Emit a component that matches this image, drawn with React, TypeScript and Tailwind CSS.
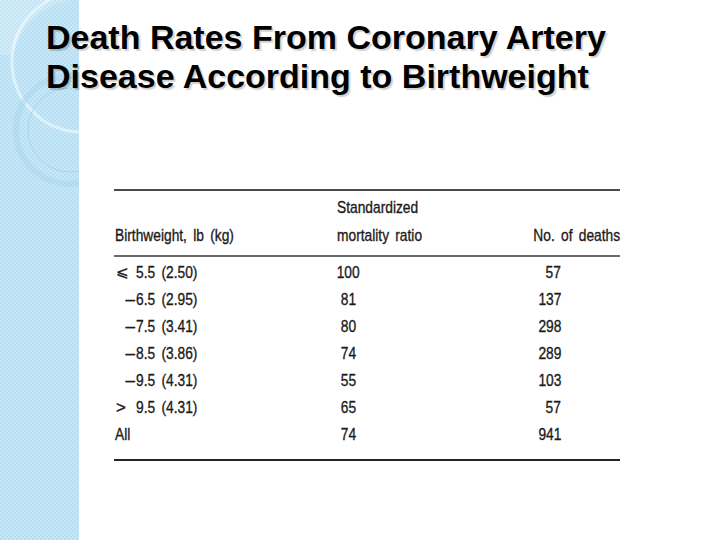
import React from "react";

const rows: { pre: string; preAlign: "l" | "r" | "n"; w: string; smr: string; n: string }[] = [
  { pre: "⩽", preAlign: "l", w: "5.5 (2.50)", smr: "100", n: "57" },
  { pre: "–", preAlign: "r", w: "6.5 (2.95)", smr: "81", n: "137" },
  { pre: "–", preAlign: "r", w: "7.5 (3.41)", smr: "80", n: "298" },
  { pre: "–", preAlign: "r", w: "8.5 (3.86)", smr: "74", n: "289" },
  { pre: "–", preAlign: "r", w: "9.5 (4.31)", smr: "55", n: "103" },
  { pre: ">", preAlign: "l", w: "9.5 (4.31)", smr: "65", n: "57" },
  { pre: "", preAlign: "n", w: "All", smr: "74", n: "941" },
];

function Strip() {
  return (
    <div className="absolute left-0 top-0 h-[540px] w-[79px] overflow-hidden bg-[#bfe3f5] bg-[repeating-conic-gradient(#b6def2_0_25%,#c9e9f8_0_50%)] [background-size:4px_4px]">
      <svg width="79" height="540" viewBox="0 0 79 540" className="block">
        <path d="M0 0 L70 0 A70 70 0 0 0 13 55 L0 55 Z" fill="#ffffff" opacity="0.2" />
        <circle cx="82" cy="62" r="70" fill="none" stroke="#ffffff" strokeWidth="3" opacity="0.5" />
        <circle cx="70" cy="130" r="54" fill="none" stroke="#a9d6ec" strokeWidth="6" opacity="0.5" />
        <circle cx="70" cy="130" r="42" fill="none" stroke="#9ccde6" strokeWidth="1" opacity="0.7" />
      </svg>
    </div>
  );
}

function T({ children, origin = "l" }: { children: React.ReactNode; origin?: "l" | "c" | "r" }) {
  const o = origin === "l" ? "origin-left" : origin === "r" ? "origin-right" : "origin-center";
  return (
    <span className={`inline-block shrink-0 whitespace-nowrap scale-x-[0.81] [word-spacing:3px] ${o}`}>{children}</span>
  );
}

export default function App() {
  const tf = { fontFamily: '"Liberation Sans", Arial, sans-serif' };
  return (
    <div className="relative h-[540px] w-[720px] overflow-hidden bg-white">
      <Strip />
      <div className="relative flex flex-col">
        <h1
          className="pl-[46px] pt-[18px] text-[34px] font-bold leading-[39px] text-black [text-shadow:2px_2px_1px_rgba(0,0,0,0.18)]"
          style={{ fontFamily: '"Liberation Sans", Arial, sans-serif' }}
        >
          Death Rates From Coronary Artery
          <br />
          Disease According to Birthweight
        </h1>
        <div
          className="ml-[114px] mt-[93px] w-[506px] text-[17px] text-[#1c1a1b] [-webkit-text-stroke:0.35px_#1c1a1b]"
          style={tf}
        >
          <div className="h-[2px] bg-[#4a4a4a]" />
          <div className="grid grid-cols-[223px_200px_83px] pb-[5px] pt-[3px] leading-[28px]">
            <div className="pl-[1px]">
              <div>&nbsp;</div>
              <div>
                <T>Birthweight, lb (kg)</T>
              </div>
            </div>
            <div>
              <div>
                <T>Standardized</T>
              </div>
              <div>
                <T>mortality ratio</T>
              </div>
            </div>
            <div>
              <div>&nbsp;</div>
              <div className="flex justify-end">
                <T origin="r">No. of deaths</T>
              </div>
            </div>
          </div>
          <div className="h-[2px] bg-[#6a6a6a]" />
          <div className="pb-[11px] pt-[2px]">
            {rows.map((r, i) => (
              <div key={i} className="grid h-[27px] grid-cols-[223px_200px_83px] items-center leading-[27px]">
                <div className="flex pl-[1px]">
                  {r.preAlign !== "n" && (
                    <span
                      className={
                        r.preAlign === "l"
                          ? "w-[21px] shrink-0 pl-[1px] text-left"
                          : "w-[21px] shrink-0 pr-[1px] text-right"
                      }
                      style={r.pre === "⩽" ? { fontFamily: '"DejaVu Sans", sans-serif', fontSize: "15px" } : undefined}
                    >
                      {r.pre}
                    </span>
                  )}
                  <T>{r.w}</T>
                </div>
                <div>
                  <div className="flex w-[22px] justify-center">
                    <T origin="c">{r.smr}</T>
                  </div>
                </div>
                <div>
                  <div className="flex w-[24px] justify-end">
                    <T origin="r">{r.n}</T>
                  </div>
                </div>
              </div>
            ))}
          </div>
          <div className="h-[2px] bg-[#262626]" />
        </div>
      </div>
    </div>
  );
}
